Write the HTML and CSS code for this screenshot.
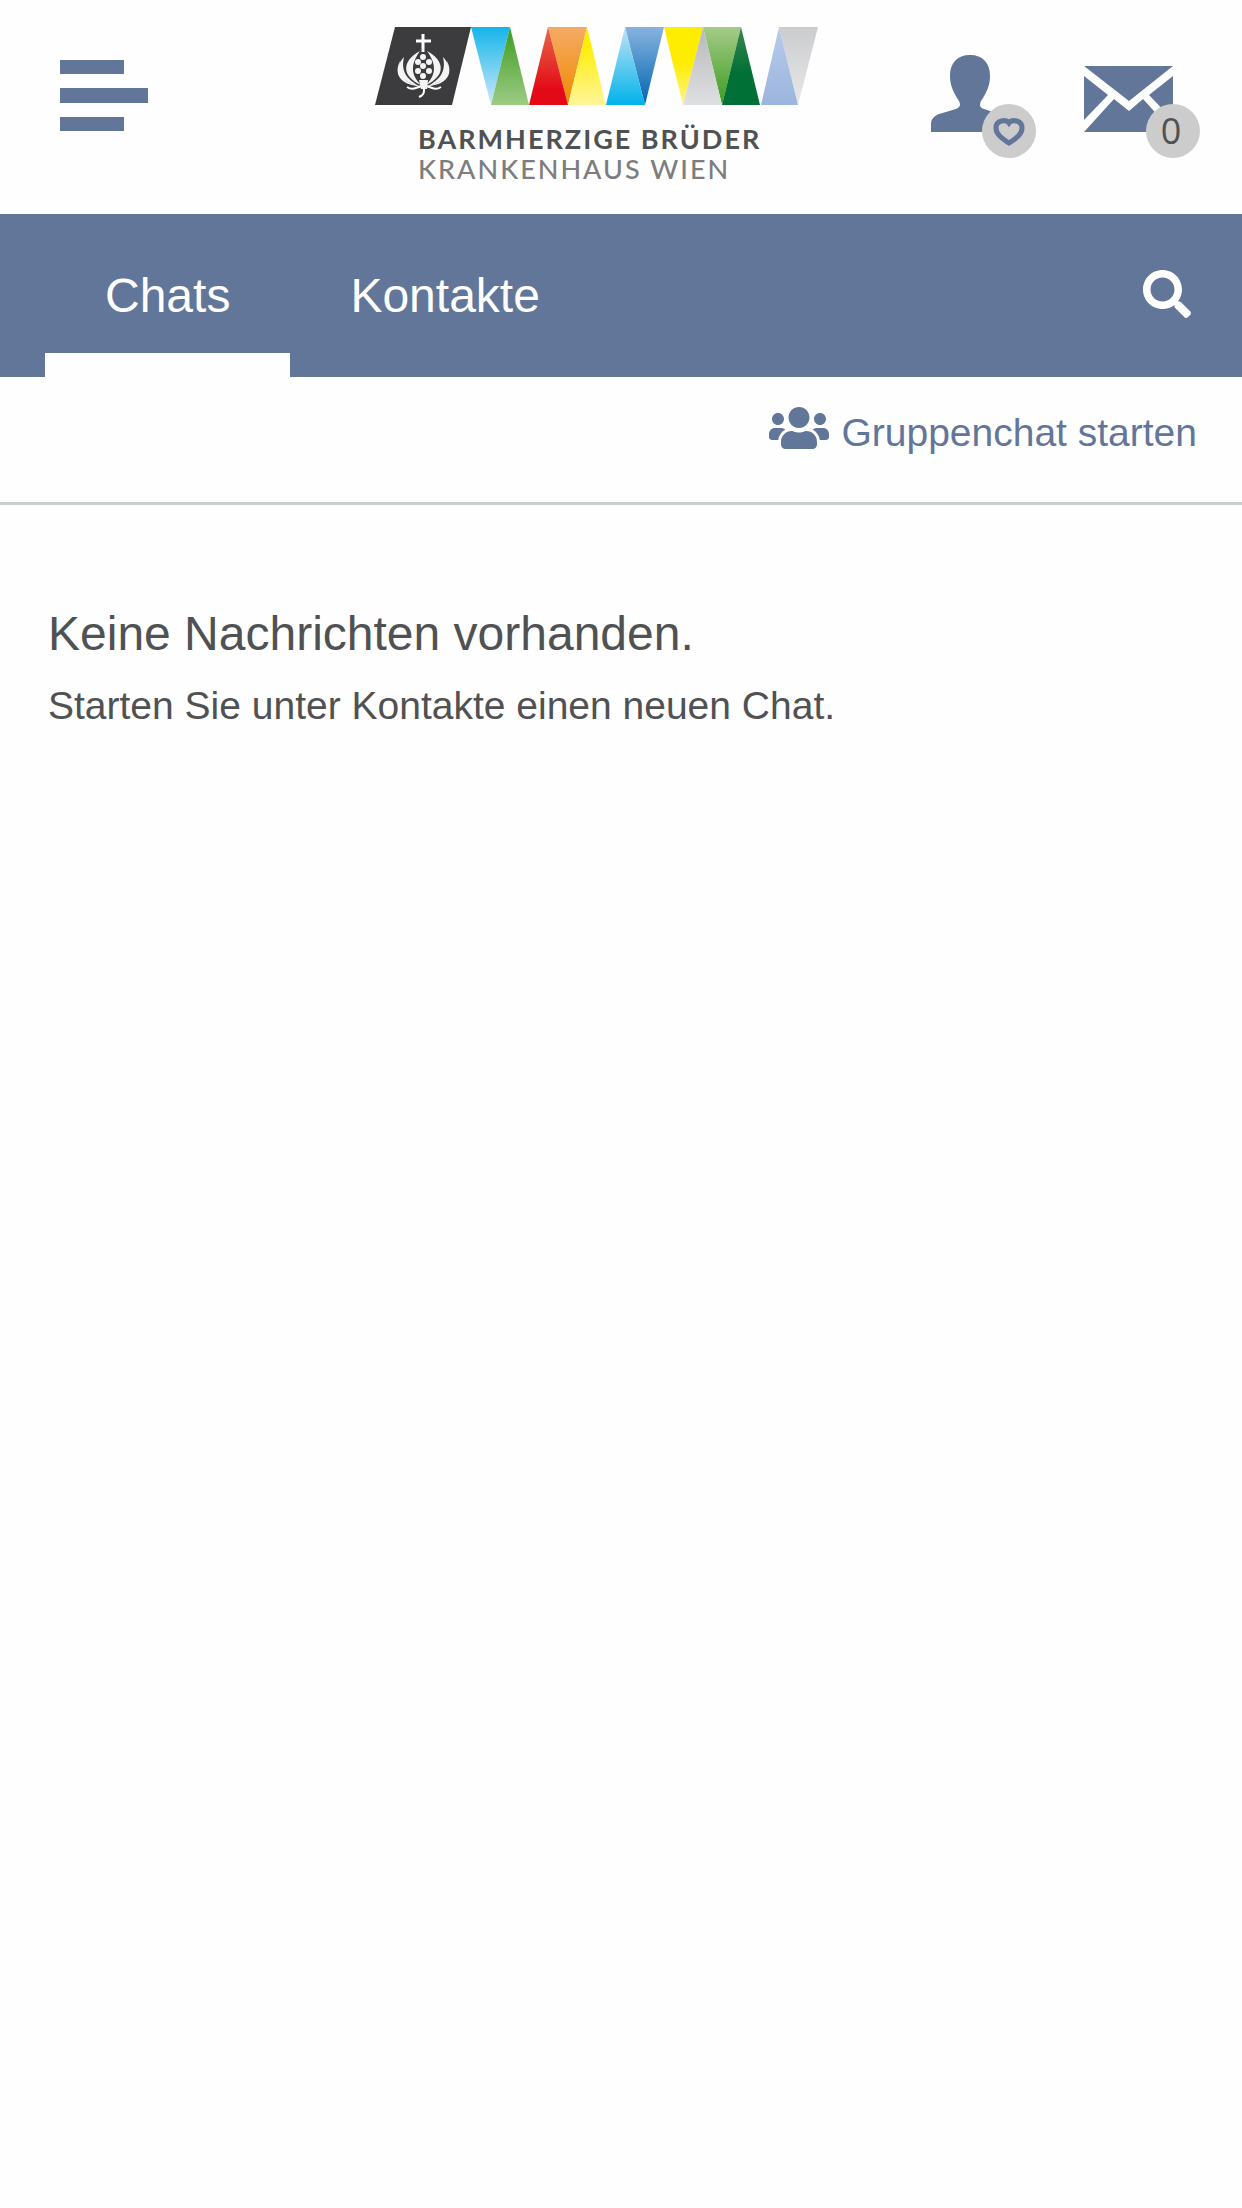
FILE: index.html
```html
<!DOCTYPE html>
<html lang="de">
<head>
<meta charset="utf-8">
<meta name="viewport" content="width=device-width, initial-scale=1">
<title>Chats</title>
<link rel="stylesheet" href="styles.css">
</head>
<body>
<header class="header">
  <button class="icon-button" type="button" aria-label="Menü">
    <svg width="88" height="72" viewBox="0 0 88 72"><path d="M0 0h64v14H0zM0 28h88v15H0zM0 57h64v14H0z"/></svg>
  </button>
  <a class="logo" href="#" aria-label="Startseite">
    <svg width="446" height="160" viewBox="0 0 446 160">
      <defs>
        <linearGradient id="sky" x2="0" y2="1"><stop stop-color="#16b5ea"/><stop offset="1" stop-color="#cde9fa"/></linearGradient>
        <linearGradient id="leaf" x2="0" y2="1"><stop stop-color="#3c9c1e"/><stop offset="1" stop-color="#9dcb86"/></linearGradient>
        <linearGradient id="red" x2="0" y2="1"><stop stop-color="#e8694a"/><stop offset=".8" stop-color="#e30a17"/></linearGradient>
        <linearGradient id="orange" x2="0" y2="1"><stop stop-color="#f5ab66"/><stop offset="1" stop-color="#ef8a00"/></linearGradient>
        <linearGradient id="lemon" x2="0" y2="1"><stop offset=".2" stop-color="#ffed00"/><stop offset="1" stop-color="#fff59b"/></linearGradient>
        <linearGradient id="cyan" x2="0" y2="1"><stop stop-color="#c0e3f6"/><stop offset="1" stop-color="#00b2ea"/></linearGradient>
        <linearGradient id="blue" x2="0" y2="1"><stop stop-color="#88b3df"/><stop offset="1" stop-color="#0064b1"/></linearGradient>
        <linearGradient id="yellow" x2="0" y2="1"><stop offset=".45" stop-color="#ffed00"/><stop offset="1" stop-color="#fff48a"/></linearGradient>
        <linearGradient id="grey" x2="0" y2="1"><stop stop-color="#b8b9bb"/><stop offset="1" stop-color="#dfe0e1"/></linearGradient>
        <linearGradient id="meadow" x2="0" y2="1"><stop stop-color="#a5cb89"/><stop offset="1" stop-color="#3c9c1e"/></linearGradient>
        <linearGradient id="forest" x2="0" y2="1"><stop stop-color="#3a8650"/><stop offset=".6" stop-color="#007036"/></linearGradient>
        <linearGradient id="pale" x2="0" y2="1"><stop stop-color="#b7cbea"/><stop offset="1" stop-color="#9cb5de"/></linearGradient>
        <linearGradient id="silver" x2="0" y2="1"><stop stop-color="#cbccce"/><stop offset="1" stop-color="#e8e8e9"/></linearGradient>
      </defs>
      <path fill="#3c3c3e" d="M20 0h76L77 78H0z"/>
      <path fill="url(#sky)" d="M96 0h39l-19 78z"/>
      <path fill="url(#leaf)" d="M135 0l19 78h-38z"/>
      <path fill="url(#orange)" d="M173 0h39l-19 78z"/>
      <path fill="url(#red)" d="M173 0l20 78h-39z"/>
      <path fill="url(#lemon)" d="M212 0l19 78h-38z"/>
      <path fill="url(#blue)" d="M250 0h39l-19 78z"/>
      <path fill="url(#cyan)" d="M250 0l20 78h-39z"/>
      <path fill="url(#yellow)" d="M289 0h39l-20 78z"/>
      <path fill="url(#meadow)" d="M328 0h38l-19 78z"/>
      <path fill="url(#grey)" d="M328 0l19 78h-39z"/>
      <path fill="url(#forest)" d="M366 0l19 78h-38z"/>
      <path fill="url(#silver)" d="M404 0h39l-20 78z"/>
      <path fill="url(#pale)" d="M404 0l19 78h-37z"/>
      <g fill="none" stroke="#fff" stroke-width="3">
        <path d="M48 7v18M41 14h15"/>
        <path stroke-width="2" d="M49 59v5q0 4-5 6M47 59c-5 1-9 5-15 1M51 59c5 1 9 5 15 1"/>
      </g>
      <g fill="#f4f4f4">
        <path d="M45 24C25 35 28 50 46 58C36 48 35 38 45 24zM52 24C72 35 69 50 51 58C61 48 62 38 52 24z"/>
        <path d="M29 30C19 40 22 54 46 60C30 52 26 43 29 30zM68 30C78 40 75 54 51 60C67 52 71 43 68 30z"/>
        <path d="M25 34C17 50 30 59 45 59C31 57 23 49 25 34zM72 34C80 50 67 59 52 59C66 57 74 49 72 34z"/>
        <path d="M44 53h9l-1 9h-6z"/>
        <circle cx="48" cy="30" r="3"/><circle cx="43" cy="35" r="3"/><circle cx="54" cy="35" r="3"/><circle cx="48" cy="39" r="3"/><circle cx="43" cy="44" r="3"/><circle cx="54" cy="44" r="3"/><circle cx="48" cy="49" r="3"/>
      </g>
      <text class="logo-name" x="43" y="122">BARMHERZIGE BRÜDER</text>
      <text class="logo-place" x="43" y="152">KRANKENHAUS WIEN</text>
    </svg>
  </a>
  <div class="actions">
    <button class="icon-button" type="button" aria-label="Profil">
      <svg width="106" height="104" viewBox="0 0 106 104"><path d="M0 77V69c0-5 3-8 8-10l17-5c4-2 5-4 3-8-6-9-9-16-9-25C19 8 26 0 39 0s20 8 20 21c0 9-3 16-9 25-2 4-1 7 3 8l15 5v18z"/><circle class="badge" cx="78" cy="76" r="27"/><path class="heart" d="M78 68c-3-4-13-3-13 5 0 7 7 11 13 15 6-4 13-8 13-15 0-8-10-9-13-5z"/></svg>
    </button>
    <button class="icon-button" type="button" aria-label="Nachrichten: 0">
      <svg width="116" height="104" viewBox="0 0 116 104"><path d="M0 11h89L45 46zM0 21l24 19L0 65zM0 77l30-33 15 12 14-12 30 33zM89 21v44L65 40z"/><circle class="badge" cx="89" cy="76" r="27"/><text class="count" x="87" y="89">0</text></svg>
    </button>
  </div>
</header>
<nav class="tabs">
  <a class="tab tab-active" href="#chats" aria-current="page">Chats</a>
  <a class="tab" href="#kontakte">Kontakte</a>
  <button class="icon-button search" type="button" aria-label="Suche">
    <svg width="48" height="48" viewBox="0 0 512 512"><path d="M505 442.700L405.300 343c-4.500-4.500-10.600-7-17-7H372c27.600-35.300 44-79.700 44-128C416 93.100 322.900 0 208 0S0 93.100 0 208s93.100 208 208 208c48.300 0 92.700-16.400 128-44v16.300c0 6.400 2.500 12.500 7 17l99.700 99.700c9.400 9.400 24.600 9.400 33.900 0l28.300-28.300c9.400-9.400 9.400-24.600.1-34zM208 336c-70.700 0-128-57.200-128-128 0-70.700 57.200-128 128-128 70.700 0 128 57.200 128 128 0 70.700-57.200 128-128 128z"/></svg>
  </button>
</nav>
<div class="toolbar">
  <a class="group-link" href="#gruppenchat">
    <svg width="60" height="48" viewBox="0 0 640 512"><path d="M96 224c35.300 0 64-28.700 64-64s-28.700-64-64-64-64 28.700-64 64 28.700 64 64 64zm448 0c35.300 0 64-28.700 64-64s-28.700-64-64-64-64 28.700-64 64 28.700 64 64 64zm32 32h-64c-17.600 0-33.500 7.100-45.100 18.600 40.300 22.100 68.900 62 75.100 109.400h66c17.700 0 32-14.300 32-32v-32c0-35.300-28.700-64-64-64zm-256 0c61.900 0 112-50.100 112-112S381.900 32 320 32 208 82.100 208 144s50.100 112 112 112zm76.800 32h-8.300c-20.800 10-43.900 16-68.500 16s-47.600-6-68.500-16h-8.300C179.600 288 128 339.600 128 403.200V432c0 26.500 21.500 48 48 48h288c26.500 0 48-21.500 48-48v-28.800c0-63.600-51.600-115.200-115.200-115.200zm-223.700-13.400C161.500 263.100 145.600 256 128 256H64c-35.300 0-64 28.700-64 64v32c0 17.700 14.300 32 32 32h65.900c6.300-47.400 34.900-87.300 75.200-109.400z"/></svg>
    <span>Gruppenchat starten</span>
  </a>
</div>
<main class="empty">
  <h1 class="empty-title">Keine Nachrichten vorhanden.</h1>
  <p class="empty-text">Starten Sie unter Kontakte einen neuen Chat.</p>
</main>
</body>
</html>
```
FILE: styles.css
```css
* { box-sizing: border-box; }
body {
  margin: 0;
  background: #fefefe;
  color: #505152;
  font: 39px/48px "Liberation Sans", Arial, sans-serif;
}
svg { display: block; fill: currentColor; }
a { text-decoration: none; }
.icon-button {
  padding: 0;
  border: 0;
  background: none;
  color: #627699;
}
.header {
  display: flex;
  align-items: flex-start;
  min-height: 214px;
  padding: 27px 42px 0 60px;
}
.header > .icon-button { margin-top: 33px; }
.logo { margin-left: auto; color: #505152; }
.logo-name, .logo-place {
  font-family: Lato, sans-serif;
  font-size: 27px;
  letter-spacing: 2px;
}
.logo-name { font-weight: 700; }
.logo-place { fill: #7c7d7f; font-weight: 500; }
.actions {
  display: flex;
  gap: 47px;
  margin: 28px 0 0 110px;
}
.badge { fill: #cccccc; }
.heart { fill: none; stroke: #627699; stroke-width: 5px; }
.count {
  fill: #505152;
  font: 36px "Open Sans", sans-serif;
  text-anchor: middle;
}
.tabs {
  display: flex;
  padding: 0 51px 0 45px;
  background: #627699;
}
.tab {
  padding: 55px 60px 30px;
  border-bottom: 24px solid transparent;
  color: #fff;
  font-size: 48px;
  line-height: 54px;
}
.tab-active { border-color: #fefefe; }
.search { margin: 0 0 3px auto; color: #fff; }
.toolbar {
  display: flex;
  justify-content: flex-end;
  padding: 27px 45px 50px;
  border-bottom: 3px solid #c8d0d0;
}
.group-link { display: flex; gap: 12px; color: #627699; }
.group-link span { padding-top: 10px; line-height: 38px; }
.empty { padding: 99px 48px; }
.empty-title {
  margin: 0 0 18px;
  font-size: 48px;
  font-weight: 400;
  line-height: 60px;
}
.empty-text { margin: 0; }
```
